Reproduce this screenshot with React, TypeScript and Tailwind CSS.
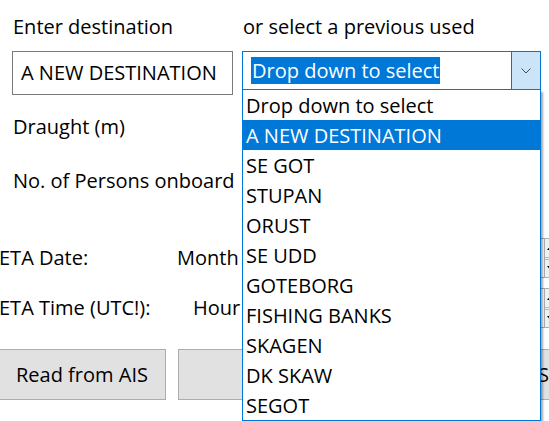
import React from "react";

const destinations = [
  "Drop down to select",
  "A NEW DESTINATION",
  "SE GOT",
  "STUPAN",
  "ORUST",
  "SE UDD",
  "GOTEBORG",
  "FISHING BANKS",
  "SKAGEN",
  "DK SKAW",
  "SEGOT",
];

function Spinner() {
  return (
    <div className="ml-auto flex h-[40px] w-[305px] shrink-0 -mr-[12px] border border-[#adadad] bg-white">
      <div className="flex-1" />
      <div className="flex w-[16px] flex-col border-l border-[#adadad]">
        <div className="flex flex-1 items-center pl-[2px] border-b-[3px] border-double border-[#b9b9b9] bg-[#f0f0f0]">
          <span className="h-0 w-0 border-x-[4px] border-b-[5px] border-x-transparent border-b-black" />
        </div>
        <div className="flex flex-1 items-center pl-[2px] bg-[#f0f0f0]">
          <span className="h-0 w-0 border-x-[4px] border-t-[5px] border-x-transparent border-t-black" />
        </div>
      </div>
    </div>
  );
}

export default function App() {
  return (
    <div
      className="relative flex h-[421px] w-[549px] flex-col overflow-hidden bg-white text-[20px] leading-[26px] text-black"
      style={{ fontFamily: '"Open Sans", "Noto Sans", sans-serif' }}
    >
      <div className="flex h-[51px] pt-[14px]">
        <span className="w-[243px] pl-[13px]">Enter destination</span>
        <span>or select a previous used</span>
      </div>

      <div className="flex h-[44px] items-start">
        <div className="ml-[12px] flex h-[44px] w-[221px] items-center border border-[#7a7a7a] pl-[8px]">
          A NEW DESTINATION
        </div>
        <div className="ml-[9px] flex h-[39px] w-[299px] border border-[#0078d7]">
          <div className="flex flex-1 items-center pl-[8px]">
            <span className="flex h-[27px] items-center bg-[#0078d7] px-[1px] text-white">
              Drop down to select
            </span>
          </div>
          <div className="flex w-[29px] items-center justify-center border-l border-[#0078d7] bg-[#cce4f7]">
            <svg width="10" height="6" viewBox="0 0 10 6">
              <polyline points="0.5,0.5 5,5 9.5,0.5" fill="none" stroke="#4a4a4a" strokeWidth="1" />
            </svg>
          </div>
        </div>
      </div>

      <div className="mt-[19px] pl-[13px]">Draught (m)</div>
      <div className="mt-[28px] pl-[13px]">No. of Persons onboard</div>

      <div className="mt-[44px] flex h-[40px] items-center">
        <span className="-ml-[1px] w-[178px] shrink-0">ETA Date:</span>
        <span>Month</span>
        <Spinner />
      </div>
      <div className="mt-[10px] flex h-[40px] items-center">
        <span className="-ml-[1px] w-[194px] shrink-0">ETA Time (UTC!):</span>
        <span>Hour</span>
        <Spinner />
      </div>

      <div className="mt-[21px] flex h-[51px]">
        <button className="-ml-[1px] h-[51px] w-[167px] shrink-0 border border-[#adadad] bg-[#e1e1e1] pl-[16px] text-left">
          Read from AIS
        </button>
        <button className="ml-[12px] h-[51px] w-[340px] shrink-0 border border-[#adadad] bg-[#e1e1e1]" />
        <button className="ml-[14px] h-[51px] w-[120px] shrink-0 border border-[#adadad] bg-[#e1e1e1] pl-[5px] text-left">
          Save
        </button>
      </div>

      <ul className="absolute left-[242px] top-[90px] w-[299px] border-x border-b border-[#0078d7] bg-white shadow-[2px_2px_2px_rgba(0,0,0,0.35)]">
        {destinations.map((d, i) => (
          <li
            key={d}
            className={
              i === 1
                ? "h-[30px] bg-[#0078d7] pl-[3px] pt-[1px] leading-[30px] text-white"
                : "h-[30px] pl-[3px] pt-[1px] leading-[30px]"
            }
          >
            {d}
          </li>
        ))}
      </ul>
    </div>
  );
}
